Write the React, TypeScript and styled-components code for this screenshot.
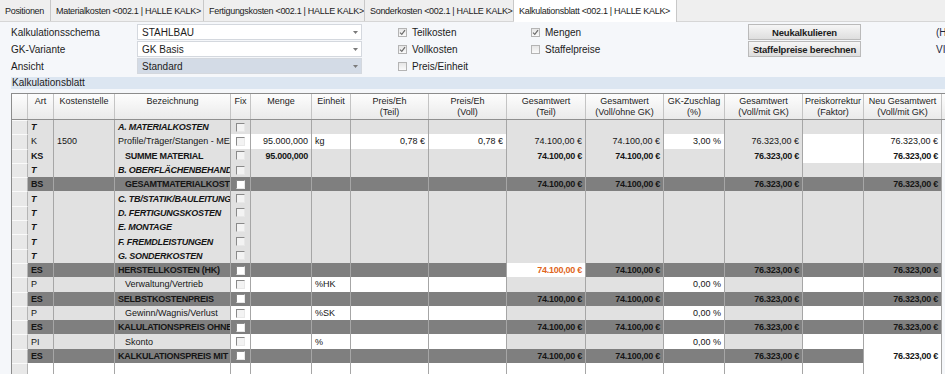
import React from 'react';
import styled, { createGlobalStyle, css } from 'styled-components';

const GlobalStyle = createGlobalStyle`
  html, body {
    margin: 0;
    padding: 0;
  }
  body {
    font-family: 'Liberation Sans', Arial, sans-serif;
    color: #1c1c1c;
    background: #f5f7fa;
  }
`;

const Page = styled.div`
  width: 945px;
  height: 374px;
  overflow: hidden;
  background: #f5f7fa;
`;

const TabBar = styled.div`
  display: flex;
  height: 21px;
  background: #efefef;
  border-bottom: 1px solid #d6d6d6;
  font-size: 9px;
  letter-spacing: -0.3px;
`;

const Tab = styled.div<{ $width: number; $active?: boolean }>`
  width: ${(p) => p.$width}px;
  flex-shrink: 0;
  box-sizing: border-box;
  display: flex;
  align-items: center;
  padding-left: 5px;
  border-right: 1px solid #c8c8c8;
  white-space: nowrap;
  overflow: hidden;
  ${(p) =>
    p.$active &&
    css`
      background: #fff;
      height: 22px;
    `}
`;

const Form = styled.div`
  display: flex;
  height: 55px;
  box-sizing: border-box;
  padding: 2px 0 0 11px;
  font-size: 10px;
`;

const Column = styled.div<{ $width: number; $gapLeft?: number }>`
  width: ${(p) => p.$width}px;
  flex-shrink: 0;
  margin-left: ${(p) => p.$gapLeft ?? 0}px;
  display: flex;
  flex-direction: column;
`;

const Line = styled.div`
  height: 17px;
  display: flex;
  align-items: center;
  white-space: nowrap;
`;

const Combo = styled.div<{ $muted?: boolean }>`
  height: 16px;
  margin-bottom: 1px;
  box-sizing: border-box;
  border: 1px solid #d4d8de;
  background: ${(p) => (p.$muted ? '#d3dbe6' : '#ffffff')};
  display: flex;
  align-items: center;
  padding-left: 4px;
  font-size: 10px;
`;

const ComboText = styled.span`
  flex: 1;
`;

const ComboArrow = styled.span`
  width: 12px;
  display: flex;
  justify-content: center;
`;

const CheckBox = styled.span`
  width: 9px;
  height: 9px;
  flex-shrink: 0;
  box-sizing: border-box;
  border: 1px solid #b4b4b4;
  background: linear-gradient(#e6e6e6, #fafafa);
  margin-right: 5px;
  display: flex;
  align-items: center;
  justify-content: center;
`;

const Button = styled.div`
  height: 16px;
  margin-bottom: 1px;
  box-sizing: border-box;
  border: 1px solid #bababa;
  background: linear-gradient(#f6f6f6, #dedede);
  font-weight: bold;
  font-size: 9.5px;
  letter-spacing: -0.2px;
  white-space: nowrap;
  display: flex;
  align-items: center;
  justify-content: center;
`;

const SideText = styled.div`
  height: 17px;
  display: flex;
  align-items: center;
  white-space: nowrap;
  color: #1d2740;
`;

const SectionBar = styled.div`
  margin: 0 0 4px 11px;
  height: 12px;
  line-height: 12px;
  background: #dce6f1;
  font-size: 10px;
  padding-left: 1px;
`;

const COLS = '16px 26px 61px 116px 20px 61px 39px 78px 78px 79px 78px 61px 78px 61px 78px 30px';

const Grid = styled.div`
  margin-left: 11px;
  border-top: 1px solid #8c8c8c;
  border-left: 1px solid #8c8c8c;
  font-size: 9px;
`;

const HeadRow = styled.div`
  display: grid;
  grid-template-columns: ${COLS};
  height: 26px;
  border-bottom: 1px solid #8f8f8f;
  box-sizing: border-box;
`;

const HeadCell = styled.div`
  background: linear-gradient(#fdfdfd, #eaeaea);
  border-right: 1px solid #c4c4c4;
  text-align: center;
  padding-top: 2px;
  line-height: 11px;
  white-space: pre-line;
  overflow: hidden;
`;

const Row = styled.div`
  display: grid;
  grid-template-columns: ${COLS};
  height: 14.3px;
`;

const Selector = styled.div`
  background: #e8e8e8;
  border-top: 1px solid #fafafa;
  border-right: 1px solid #b5b5b5;
`;

type Tone = 'gray' | 'white' | 'dark';

const toneBg: Record<Tone, string> = {
  gray: '#e1e1e1',
  white: '#ffffff',
  dark: '#7f7f7f',
};

const Cell = styled.div<{
  $tone: Tone;
  $right?: boolean;
  $center?: boolean;
  $bold?: boolean;
  $italic?: boolean;
  $indent?: boolean;
  $orange?: boolean;
}>`
  background: ${(p) => toneBg[p.$tone]};
  border-right: 1px solid #a6a6a6;
  display: flex;
  align-items: center;
  justify-content: ${(p) => (p.$center ? 'center' : p.$right ? 'flex-end' : 'flex-start')};
  padding: 0 ${(p) => (p.$right ? 3 : 0)}px 0 ${(p) => (p.$indent ? 10 : p.$center ? 0 : 3)}px;
  white-space: nowrap;
  overflow: hidden;
  font-weight: ${(p) => (p.$bold ? 'bold' : 'normal')};
  font-style: ${(p) => (p.$italic ? 'italic' : 'normal')};
  letter-spacing: ${(p) => (p.$bold ? '-0.25px' : '0')};
  color: ${(p) => (p.$orange ? '#e0651c' : '#151515')};
`;

const FixBox = styled.span<{ $onDark?: boolean }>`
  width: 9px;
  height: 9px;
  box-sizing: border-box;
  border-style: solid;
  border-width: 1px;
  border-color: #8a8a8a #e8e8e8 #e8e8e8 #8a8a8a;
  background: ${(p) => (p.$onDark ? '#ffffff' : '#f3f3f3')};
`;

const Filler = styled.div`
  background: #f5f7fa;
`;

type ColKey =
  | 'art'
  | 'kst'
  | 'bez'
  | 'fix'
  | 'menge'
  | 'einheit'
  | 'pTeil'
  | 'pVoll'
  | 'gTeil'
  | 'gOhne'
  | 'gk'
  | 'gMit'
  | 'korr'
  | 'neu';

type Kind = 'T' | 'K' | 'KS' | 'BS' | 'ES' | 'P' | 'PI' | 'empty';

type RowData = {
  kind: Kind;
  values?: Partial<Record<ColKey, string>>;
  indent?: boolean;
  white?: ColKey[];
  orange?: ColKey;
};

const columns: { key: ColKey; title: string; align: 'left' | 'right' | 'center' }[] = [
  { key: 'art', title: 'Art', align: 'left' },
  { key: 'kst', title: 'Kostenstelle', align: 'left' },
  { key: 'bez', title: 'Bezeichnung', align: 'left' },
  { key: 'fix', title: 'Fix', align: 'center' },
  { key: 'menge', title: 'Menge', align: 'right' },
  { key: 'einheit', title: 'Einheit', align: 'left' },
  { key: 'pTeil', title: 'Preis/Eh\n(Teil)', align: 'right' },
  { key: 'pVoll', title: 'Preis/Eh\n(Voll)', align: 'right' },
  { key: 'gTeil', title: 'Gesamtwert\n(Teil)', align: 'right' },
  { key: 'gOhne', title: 'Gesamtwert\n(Voll/ohne GK)', align: 'right' },
  { key: 'gk', title: 'GK-Zuschlag\n(%)', align: 'right' },
  { key: 'gMit', title: 'Gesamtwert\n(Voll/mit GK)', align: 'right' },
  { key: 'korr', title: 'Preiskorrektur\n(Faktor)', align: 'right' },
  { key: 'neu', title: 'Neu Gesamtwert\n(Voll/mit GK)', align: 'right' },
];

const inputCols: ColKey[] = ['fix', 'menge', 'einheit', 'pTeil', 'pVoll', 'gk', 'korr', 'neu'];

const whiteByKind: Record<Kind, ColKey[]> = {
  T: [],
  K: inputCols,
  KS: ['korr', 'neu'],
  BS: [],
  ES: [],
  P: inputCols,
  PI: inputCols,
  empty: columns.map((c) => c.key),
};

const sums = {
  gTeil: '74.100,00 €',
  gOhne: '74.100,00 €',
  gMit: '76.323,00 €',
  neu: '76.323,00 €',
};

const rows: RowData[] = [
  { kind: 'T', values: { art: 'T', bez: 'A. MATERIALKOSTEN' } },
  {
    kind: 'K',
    values: {
      art: 'K',
      kst: '1500',
      bez: 'Profile/Träger/Stangen - ME/S235',
      menge: '95.000,000',
      einheit: 'kg',
      pTeil: '0,78 €',
      pVoll: '0,78 €',
      gTeil: '74.100,00 €',
      gOhne: '74.100,00 €',
      gk: '3,00 %',
      gMit: '76.323,00 €',
      neu: '76.323,00 €',
    },
  },
  { kind: 'KS', indent: true, values: { art: 'KS', bez: 'SUMME MATERIAL', menge: '95.000,000', ...sums } },
  { kind: 'T', values: { art: 'T', bez: 'B. OBERFLÄCHENBEHANDLUNG' } },
  { kind: 'BS', indent: true, values: { art: 'BS', bez: 'GESAMTMATERIALKOSTEN', ...sums } },
  { kind: 'T', values: { art: 'T', bez: 'C. TB/STATIK/BAULEITUNG' } },
  { kind: 'T', values: { art: 'T', bez: 'D. FERTIGUNGSKOSTEN' } },
  { kind: 'T', values: { art: 'T', bez: 'E. MONTAGE' } },
  { kind: 'T', values: { art: 'T', bez: 'F. FREMDLEISTUNGEN' } },
  { kind: 'T', values: { art: 'T', bez: 'G. SONDERKOSTEN' } },
  {
    kind: 'ES',
    values: { art: 'ES', bez: 'HERSTELLKOSTEN (HK)', ...sums },
    white: ['gTeil'],
    orange: 'gTeil',
  },
  { kind: 'P', indent: true, values: { art: 'P', bez: 'Verwaltung/Vertrieb', einheit: '%HK', gk: '0,00 %' } },
  { kind: 'ES', values: { art: 'ES', bez: 'SELBSTKOSTENPREIS', ...sums } },
  { kind: 'P', indent: true, values: { art: 'P', bez: 'Gewinn/Wagnis/Verlust', einheit: '%SK', gk: '0,00 %' } },
  { kind: 'ES', values: { art: 'ES', bez: 'KALULATIONSPREIS OHNE SKONTO', ...sums } },
  { kind: 'PI', indent: true, values: { art: 'PI', bez: 'Skonto', einheit: '%', gk: '0,00 %' } },
  { kind: 'ES', values: { art: 'ES', bez: 'KALKULATIONSPREIS MIT SKONTO', ...sums }, white: ['neu'] },
  { kind: 'empty' },
];

const Arrow = () => (
  <svg width="5" height="3" viewBox="0 0 5 3">
    <path d="M0 0 L5 0 L2.5 3 Z" fill="#7a7a7a" />
  </svg>
);

const Tick = () => (
  <svg width="7" height="7" viewBox="0 0 7 7">
    <path d="M1 3.6 L2.8 5.4 L6 1.2" stroke="#6b6b6b" strokeWidth="1.2" fill="none" />
  </svg>
);

const Check = ({ label, checked }: { label: string; checked?: boolean }) => (
  <Line>
    <CheckBox>{checked && <Tick />}</CheckBox>
    {label}
  </Line>
);

const tabs = [
  { label: 'Positionen', width: 51 },
  { label: 'Materialkosten <002.1 | HALLE KALK>', width: 153 },
  { label: 'Fertigungskosten <002.1 | HALLE KALK>', width: 161 },
  { label: 'Sonderkosten <002.1 | HALLE KALK>', width: 149 },
  { label: 'Kalkulationsblatt <002.1 | HALLE KALK>', width: 163, active: true },
];

const TableRow = ({ row }: { row: RowData }) => {
  const dark = row.kind === 'BS' || row.kind === 'ES';
  const bold = row.kind !== 'K' && row.kind !== 'P' && row.kind !== 'PI';
  const whites = [...whiteByKind[row.kind], ...(row.white ?? [])];
  return (
    <Row>
      <Selector />
      {columns.map((col) => {
        const tone: Tone = whites.includes(col.key) ? 'white' : dark ? 'dark' : 'gray';
        return (
          <Cell
            key={col.key}
            $tone={tone}
            $right={col.align === 'right'}
            $center={col.align === 'center'}
            $bold={bold}
            $italic={row.kind === 'T'}
            $indent={col.key === 'bez' && row.indent}
            $orange={row.orange === col.key}
          >
            {col.key === 'fix'
              ? row.kind !== 'empty' && <FixBox $onDark={dark} />
              : row.values?.[col.key]}
          </Cell>
        );
      })}
      <Filler />
    </Row>
  );
};

const App = () => {
  return (
    <Page>
      <GlobalStyle />
      <TabBar>
        {tabs.map((t) => (
          <Tab key={t.label} $width={t.width} $active={t.active}>
            {t.label}
          </Tab>
        ))}
      </TabBar>

      <Form>
        <Column $width={126}>
          <Line>Kalkulationsschema</Line>
          <Line>GK-Variante</Line>
          <Line>Ansicht</Line>
        </Column>
        <Column $width={225}>
          <Combo>
            <ComboText>STAHLBAU</ComboText>
            <ComboArrow>
              <Arrow />
            </ComboArrow>
          </Combo>
          <Combo>
            <ComboText>GK Basis</ComboText>
            <ComboArrow>
              <Arrow />
            </ComboArrow>
          </Combo>
          <Combo $muted>
            <ComboText>Standard</ComboText>
            <ComboArrow>
              <Arrow />
            </ComboArrow>
          </Combo>
        </Column>
        <Column $width={133} $gapLeft={36}>
          <Check label="Teilkosten" checked />
          <Check label="Vollkosten" checked />
          <Check label="Preis/Einheit" />
        </Column>
        <Column $width={217}>
          <Check label="Mengen" checked />
          <Check label="Staffelpreise" />
        </Column>
        <Column $width={113}>
          <Button>Neukalkulieren</Button>
          <Button>Staffelpreise berechnen</Button>
        </Column>
        <Column $width={20} $gapLeft={75}>
          <SideText>(H</SideText>
          <SideText>VI</SideText>
        </Column>
      </Form>

      <SectionBar>Kalkulationsblatt</SectionBar>

      <Grid>
        <HeadRow>
          <HeadCell />
          {columns.map((c) => (
            <HeadCell key={c.key}>{c.title}</HeadCell>
          ))}
          <HeadCell />
        </HeadRow>
        {rows.map((r, i) => (
          <TableRow key={i} row={r} />
        ))}
      </Grid>
    </Page>
  );
};

export default App;
